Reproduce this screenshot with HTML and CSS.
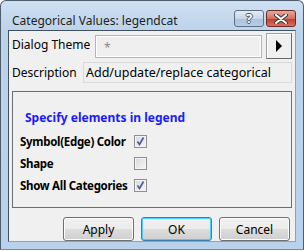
FILE: index.html
```html
<html>

<head>
    <link rel="stylesheet" href="styles.css">
</head>

<body>

    <div class="window">
        <div class="titlebar">
            <span class="title">Categorical Values: legendcat</span>
            <div class="caption">
                <span class="cap help">?</span>
                <span class="cap close">
                    <svg width="14" height="10" viewBox="0 0 14 10">
                        <path d="M2 1 L12 9 M12 1 L2 9" stroke="#3d3d3d" stroke-width="4" stroke-linecap="round"/>
                        <path d="M2 1 L12 9 M12 1 L2 9" stroke="#ffffff" stroke-width="2" stroke-linecap="round"/>
                    </svg>
                </span>
            </div>
        </div>
        <div class="client">
            <div class="theme-row">
                <span class="label theme-label">Dialog Theme</span>
                <div class="theme-field">*</div>
                <div class="arrow-btn">
                    <svg width="8" height="12" viewBox="0 0 8 12">
                        <path d="M1 0 L7 6 L1 12 Z" fill="#000"/>
                    </svg>
                </div>
            </div>
            <div class="desc-row">
                <span class="label desc-label">Description</span>
                <div class="desc-field">Add/update/replace categorical</div>
            </div>
            <div class="group">
                <div class="group-title">Specify elements in legend</div>
                <div class="check-row">
                    <span class="check-label">Symbol(Edge) Color</span>
                    <span class="box">
                        <svg width="11" height="11" viewBox="0 0 11 11">
                            <path d="M2.5 5.5 L4.5 8.5 L8.5 1.5" fill="none" stroke="#4658a0" stroke-width="1.6"/>
                        </svg>
                    </span>
                </div>
                <div class="check-row">
                    <span class="check-label">Shape</span>
                    <span class="box"></span>
                </div>
                <div class="check-row">
                    <span class="check-label">Show All Categories</span>
                    <span class="box">
                        <svg width="11" height="11" viewBox="0 0 11 11">
                            <path d="M2.5 5.5 L4.5 8.5 L8.5 1.5" fill="none" stroke="#4658a0" stroke-width="1.6"/>
                        </svg>
                    </span>
                </div>
            </div>
            <div class="buttons">
                <div class="btn">Apply</div>
                <div class="btn default">OK</div>
                <div class="btn">Cancel</div>
            </div>
        </div>
    </div>

</body>

</html>
```

FILE: styles.css
```css
body,
html {
    margin: 0;
    width: 304px;
    height: 251px;
    background: #ffffff;
    font-family: "Noto Sans", sans-serif;
    font-size: 12px;
    color: #000;
}

.window {
    box-sizing: border-box;
    width: 304px;
    height: 250px;
    border: 1px solid #4d5d6e;
    border-bottom-color: #3aa3c4;
    border-radius: 6px 6px 0 0;
    background: linear-gradient(#cfe0f2, #bcd3ea 30px, #b9d1ea);
    padding: 0 7px 7px 7px;
}

.titlebar {
    height: 29px;
    display: flex;
    align-items: flex-start;
    justify-content: space-between;
}

.title {
    margin: 11px 0 0 4px;
    font-size: 12px;
    color: #1e1e1e;
    white-space: nowrap;
}

.caption {
    display: flex;
    gap: 2px;
    margin-top: 9px;
}

.cap {
    box-sizing: border-box;
    width: 30px;
    height: 17px;
    border: 1px solid #5f6f86;
    border-radius: 3px;
    display: flex;
    align-items: center;
    justify-content: center;
}

.help {
    background: linear-gradient(#e3ecf6, #c5d7ea 50%, #a9c2de 51%, #b6cde6);
    color: #fff;
    font-weight: bold;
    font-size: 13px;
    line-height: 13px;
    text-shadow: 1px 0 #4a5a70, -1px 0 #4a5a70, 0 1px #4a5a70, 0 -1px #4a5a70;
}

.close {
    border-color: #6e2a24;
    background: linear-gradient(#e9a99b, #d36f5e 50%, #c1382a 51%, #d8725e);
}

.client {
    box-sizing: border-box;
    height: 212px;
    background: #f0f0f0;
    border: 1px solid #8da2b8;
    border-top-color: #42505f;
    border-left-color: #42505f;
    padding: 0 3px 0 3px;
}

.theme-row {
    display: flex;
    align-items: center;
    height: 26px;
    margin-top: 2px;
}

.label {
    color: #000;
    white-space: nowrap;
}

.theme-label {
    width: 83px;
    margin-top: -4px;
}

.theme-field {
    box-sizing: border-box;
    width: 167px;
    height: 23px;
    border: 1px solid #b5b5b5;
    box-shadow: inset 1px 1px 0 #ffffff, inset -1px -1px 0 #ffffff;
    background: #efefef;
    color: #8a8a8a;
    padding: 3px 0 0 8px;
}

.arrow-btn {
    box-sizing: border-box;
    width: 26px;
    height: 26px;
    margin-left: 4px;
    border: 1px solid #a0a0a0;
    border-right-color: #696969;
    border-bottom-color: #696969;
    box-shadow: inset 1px 1px 0 #ffffff;
    background: #f0f0f0;
    display: flex;
    align-items: center;
    justify-content: center;
}

.desc-row {
    display: flex;
    align-items: center;
    height: 21px;
    margin-top: 3px;
}

.desc-label {
    width: 71px;
}

.desc-field {
    box-sizing: border-box;
    flex: 1;
    height: 21px;
    border: 1px solid #d9d9d9;
    background: #f0f0f0;
    padding: 1px 0 0 2px;
    font-size: 12.5px;
    white-space: nowrap;
}

.group {
    box-sizing: border-box;
    height: 117px;
    margin-top: 8px;
    border: 1px solid #6d6d6d;
    padding: 18px 0 0 7px;
}

.group-title {
    height: 20px;
    line-height: 16px;
    margin-left: 5px;
    color: #1a1aff;
    font-weight: bold;
    white-space: nowrap;
}

.check-row {
    display: flex;
    align-items: center;
    height: 22px;
}

.check-label {
    width: 114px;
    font-weight: bold;
    font-size: 11.5px;
    letter-spacing: -0.3px;
    white-space: nowrap;
}

.box {
    box-sizing: border-box;
    width: 13px;
    height: 13px;
    border: 1px solid #8e8f8f;
    background: linear-gradient(135deg, #d8d8d8, #f6f6f6);
    box-shadow: inset 0 0 0 1px #f4f4f4;
    display: flex;
}

.buttons {
    display: flex;
    justify-content: flex-end;
    gap: 7px;
    margin-top: 9px;
    padding-right: 2px;
}

.btn {
    box-sizing: border-box;
    width: 71px;
    height: 24px;
    border: 1px solid #707070;
    border-radius: 3px;
    background: linear-gradient(#f2f2f2, #ebebeb 50%, #dddddd 51%, #cfcfcf);
    box-shadow: inset 0 0 0 1px #fcfcfc;
    display: flex;
    align-items: center;
    justify-content: center;
}

.btn.default {
    border-color: #3c7fb1;
    box-shadow: inset 0 0 0 1px #48d0ff;
}
```
